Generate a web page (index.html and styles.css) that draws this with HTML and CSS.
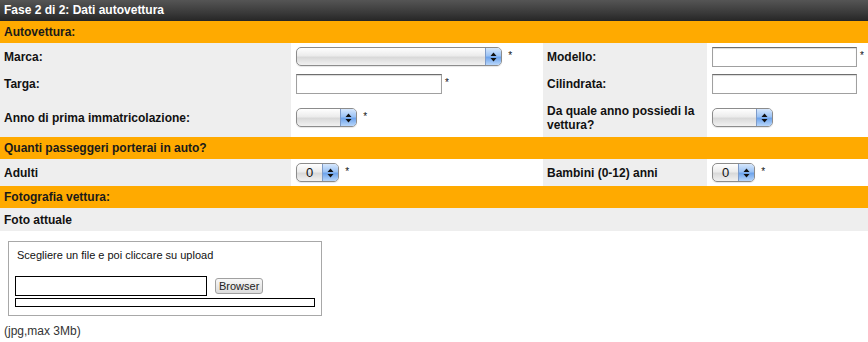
FILE: index.html
```html
<!DOCTYPE html>
<html lang="it">
  <head>
    <meta charset="UTF-8" />
    <title>Dati autovettura</title>
    <link rel="stylesheet" href="styles.css">
  </head>
  <body>
    <div class="step-title">Fase 2 di 2: Dati autovettura</div>

    <table class="form-table">
      <colgroup>
        <col class="c1" /><col class="c2" /><col class="c3" /><col class="c4" />
      </colgroup>
      <tr class="section">
        <td colspan="4">Autovettura:</td>
      </tr>
      <tr class="row-a">
        <td class="label">Marca:</td>
        <td class="value">
          <span class="sel sel-wide"><span class="sel-val"></span><span class="sel-btn"><svg width="7" height="10" viewBox="0 0 7 10"><path d="M3.5 0.5L6.5 4H0.5Z M3.5 9.5L6.5 6H0.5Z" fill="#111"/></svg></span></span>
          <span class="req">*</span>
        </td>
        <td class="label">Modello:</td>
        <td class="value"><input type="text" class="txt txt-r" /><span class="req">*</span></td>
      </tr>
      <tr class="row-b">
        <td class="label">Targa:</td>
        <td class="value"><input type="text" class="txt txt-l" /><span class="req">*</span></td>
        <td class="label">Cilindrata:</td>
        <td class="value"><input type="text" class="txt txt-r" /></td>
      </tr>
      <tr class="row-c">
        <td class="label">Anno di prima immatricolazione:</td>
        <td class="value">
          <span class="sel sel-year"><span class="sel-val"></span><span class="sel-btn"><svg width="7" height="10" viewBox="0 0 7 10"><path d="M3.5 0.5L6.5 4H0.5Z M3.5 9.5L6.5 6H0.5Z" fill="#111"/></svg></span></span>
          <span class="req">*</span>
        </td>
        <td class="label">Da quale anno possiedi la vettura?</td>
        <td class="value">
          <span class="sel sel-year"><span class="sel-val"></span><span class="sel-btn"><svg width="7" height="10" viewBox="0 0 7 10"><path d="M3.5 0.5L6.5 4H0.5Z M3.5 9.5L6.5 6H0.5Z" fill="#111"/></svg></span></span>
        </td>
      </tr>
      <tr class="section">
        <td colspan="4">Quanti passeggeri porterai in auto?</td>
      </tr>
      <tr class="row-a">
        <td class="label">Adulti</td>
        <td class="value">
          <span class="sel sel-num"><span class="sel-val">0</span><span class="sel-btn"><svg width="7" height="10" viewBox="0 0 7 10"><path d="M3.5 0.5L6.5 4H0.5Z M3.5 9.5L6.5 6H0.5Z" fill="#111"/></svg></span></span>
          <span class="req">*</span>
        </td>
        <td class="label">Bambini (0-12) anni</td>
        <td class="value">
          <span class="sel sel-num"><span class="sel-val">0</span><span class="sel-btn"><svg width="7" height="10" viewBox="0 0 7 10"><path d="M3.5 0.5L6.5 4H0.5Z M3.5 9.5L6.5 6H0.5Z" fill="#111"/></svg></span></span>
          <span class="req">*</span>
        </td>
      </tr>
      <tr class="section">
        <td colspan="4">Fotografia vettura:</td>
      </tr>
      <tr class="row-foto">
        <td class="label" colspan="4">Foto attuale</td>
      </tr>
    </table>

    <div class="upload-box">
      <div class="upload-hint">Scegliere un file e poi cliccare su upload</div>
      <div class="upload-row">
        <input type="text" class="upload-file" />
        <button type="button" class="upload-btn">Browser</button>
      </div>
      <div class="upload-progress"></div>
    </div>

    <div class="upload-note">(jpg,max 3Mb)</div>
  </body>
</html>
```

FILE: styles.css
```css
body {
    margin: 0;
    padding: 0;
    font-family: "Liberation Sans", Arial, sans-serif;
    font-size: 12px;
    color: #111;
    background-color: #fff;
}

.step-title {
    height: 21px;
    line-height: 20px;
    padding-left: 4px;
    color: #fff;
    font-weight: bold;
    background: linear-gradient(#555555, #3a3a3a 60%, #262626);
}

.form-table {
    width: 868px;
    border-collapse: collapse;
    table-layout: fixed;
}

.form-table td {
    padding: 0 0 0 4px;
}

.c1 { width: 291px; }
.c2 { width: 252px; }
.c3 { width: 164px; }
.c4 { width: 161px; }

.section td {
    height: 22px;
    background-color: #ffaa00;
    font-weight: bold;
    color: #1a1a1a;
}

.label {
    background-color: #eeeeee;
    font-weight: bold;
    line-height: 14px;
}

.value {
    background-color: #fff;
}

.form-table td.value {
    padding-left: 5px;
}

.row-a td { height: 27px; }
.row-b td { height: 28px; }
.row-c td { height: 39px; }
.row-foto td { height: 23px; }

.req {
    font-size: 10px;
    margin-left: 3px;
    vertical-align: 1px;
}

.txt {
    box-sizing: border-box;
    height: 20px;
    border: 1px solid #a0a0a0;
    border-top-color: #6e6e6e;
    box-shadow: inset 0 1px 1px rgba(0,0,0,0.15);
    vertical-align: middle;
    padding: 0 2px;
    margin: 0;
}

.txt-l { width: 146px; }
.txt-r { width: 145px; }

.sel {
    display: inline-flex;
    box-sizing: border-box;
    height: 19px;
    border: 1px solid #8c8c8c;
    border-radius: 5px;
    background: linear-gradient(#ffffff, #ececec 45%, #d9d9d9 55%, #f1f1f1);
    vertical-align: middle;
    overflow: hidden;
    box-shadow: 0 1px 1px rgba(0,0,0,0.1);
}

.sel-wide { width: 206px; }
.sel-year { width: 61px; }
.sel-num { width: 43px; }

.sel-val {
    flex: 1;
    font-size: 13px;
    line-height: 17px;
    padding-left: 9px;
    color: #111;
}

.sel-btn {
    width: 15px;
    display: flex;
    align-items: center;
    justify-content: center;
    border-left: 1px solid #7e9bc8;
    background: linear-gradient(#d6e7fc, #9cc3f5 45%, #6ea4ec 55%, #b8d6fa);
}

.upload-box {
    box-sizing: border-box;
    width: 314px;
    height: 75px;
    margin: 10px 0 0 8px;
    border: 1px solid #a8a8a8;
    padding: 7px 6px 0 6px;
}

.upload-hint {
    font-size: 11px;
    padding-left: 2px;
    color: #111;
}

.upload-row {
    display: flex;
    align-items: center;
    margin-top: 15px;
}

.upload-file {
    box-sizing: border-box;
    width: 192px;
    height: 20px;
    border: 1px solid #000;
    margin: 0;
    padding: 0;
}

.upload-btn {
    margin-left: 8px;
    height: 16px;
    padding: 0 3px;
    font-family: "Liberation Sans", Arial, sans-serif;
    font-size: 11px;
    color: #222;
    border: 1px solid #a0a0a0;
    border-radius: 3px;
    background: linear-gradient(#f8f8f8, #dcdcdc);
}

.upload-progress {
    box-sizing: border-box;
    width: 300px;
    height: 9px;
    margin-top: 2px;
    border: 1px solid #000;
}

.upload-note {
    margin: 8px 0 0 4px;
    color: #333;
    font-size: 12px;
}
```
